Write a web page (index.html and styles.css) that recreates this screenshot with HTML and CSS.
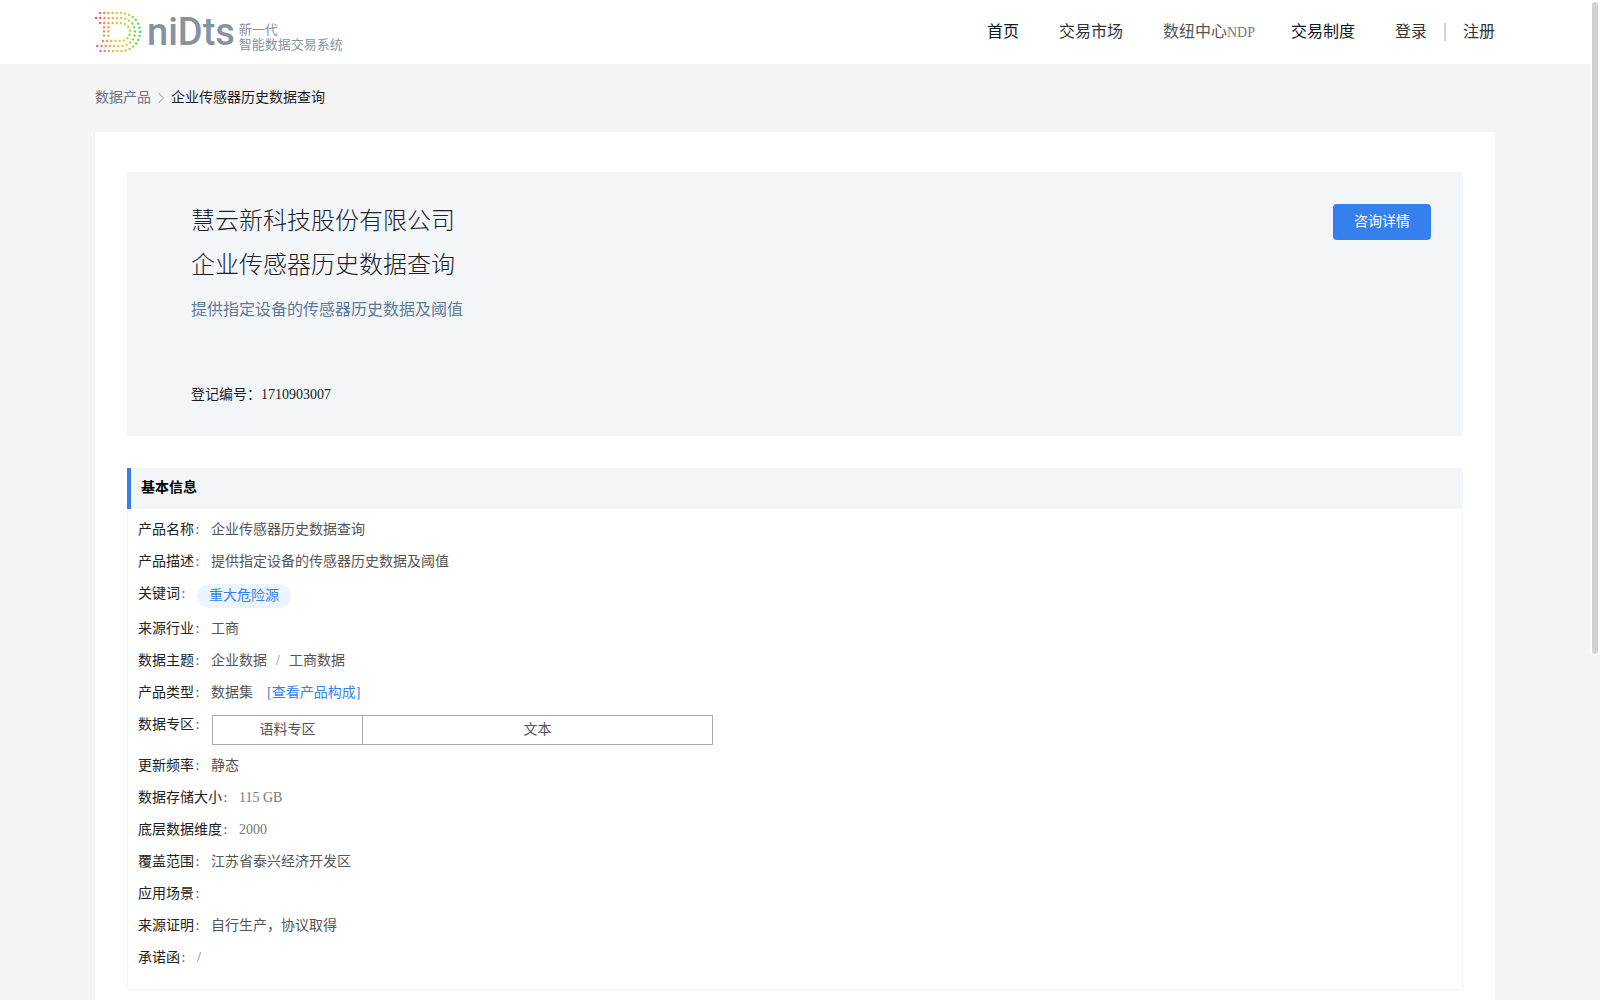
FILE: index.html
```html
<!DOCTYPE html>
<html lang="zh-CN">
<head>
	<meta charset="UTF-8">
	<title>企业传感器历史数据查询</title>
	<link rel="stylesheet" href="styles.css">
</head>
<body>
<!-- 头部 -->
<header class="header">
	<div class="wrap header-inner">
		<a href="#" class="logo">
			<svg class="logo-mark" width="48" height="44" viewBox="0 0 48 44" aria-hidden="true">
				<defs>
					<linearGradient id="dots" gradientUnits="userSpaceOnUse" x1="0" y1="0" x2="46" y2="0">
						<stop offset="0" stop-color="#f5437c"/>
						<stop offset=".2" stop-color="#f78358"/>
						<stop offset=".4" stop-color="#edb83a"/>
						<stop offset=".62" stop-color="#dbd52a"/>
						<stop offset=".8" stop-color="#93d42f"/>
						<stop offset="1" stop-color="#2fdc78"/>
					</linearGradient>
				</defs>
				<g fill="none" stroke="url(#dots)" stroke-width="2.4" stroke-linecap="round" stroke-dasharray="0 4.2">
					<path d="M5 3H26A19 19 0 0 1 26 41H5"/>
					<path d="M1 8H26A14 14 0 0 1 26 36H1"/>
					<path d="M5 13H26A9 9 0 0 1 26 31H5"/>
					<path d="M9 17.2L9.01 27.5M13.4 17.2L13.41 27.5"/>
				</g>
			</svg>
			<span class="logo-name">niDts</span>
			<span class="logo-text"><span>新一代</span><span>智能数据交易系统</span></span>
		</a>
		<nav class="nav">
			<a href="#" class="on">首页</a>
			<a href="#">交易市场</a>
			<a href="#" class="ndp">数纽中心<span>NDP</span></a>
			<a href="#" class="on">交易制度</a>
			<div class="user">
				<a href="#">登录</a>
				<i class="line"></i>
				<a href="#">注册</a>
			</div>
		</nav>
	</div>
</header>

<!-- 面包屑 -->
<div class="wrap crumb">
	<a href="#">数据产品</a>
	<svg width="8" height="12" viewBox="0 0 8 12" aria-hidden="true"><path d="M1.5 1L6.5 6L1.5 11" fill="none" stroke="#b4b8c0" stroke-width="1.2"/></svg>
	<span>企业传感器历史数据查询</span>
</div>

<main class="wrap main">
	<div class="banner">
		<div class="banner-info">
			<h1>慧云新科技股份有限公司</h1>
			<h1>企业传感器历史数据查询</h1>
			<p class="desc">提供指定设备的传感器历史数据及阈值</p>
			<p class="code">登记编号：<span>1710903007</span></p>
		</div>
		<button type="button" class="btn">咨询详情</button>
	</div>

	<!-- 基本信息 -->
	<section class="info">
		<h2>基本信息</h2>
		<dl>
			<div class="row"><dt>产品名称<b>:</b></dt><dd>企业传感器历史数据查询</dd></div>
			<div class="row"><dt>产品描述<b>:</b></dt><dd>提供指定设备的传感器历史数据及阈值</dd></div>
			<div class="row"><dt>关键词<b>:</b></dt><dd><span class="tag">重大危险源</span></dd></div>
			<div class="row"><dt>来源行业<b>:</b></dt><dd>工商</dd></div>
			<div class="row"><dt>数据主题<b>:</b></dt><dd>企业数据<i class="slash">/</i>工商数据</dd></div>
			<div class="row"><dt>产品类型<b>:</b></dt><dd>数据集<a href="#">[查看产品构成]</a></dd></div>
			<div class="row"><dt>数据专区<b>:</b></dt><dd>
				<table>
					<tr><td class="zone">语料专区</td><td class="type">文本</td></tr>
				</table>
			</dd></div>
			<div class="row"><dt>更新频率<b>:</b></dt><dd>静态</dd></div>
			<div class="row"><dt>数据存储大小<b>:</b></dt><dd class="num">115 GB</dd></div>
			<div class="row"><dt>底层数据维度<b>:</b></dt><dd class="num">2000</dd></div>
			<div class="row"><dt>覆盖范围<b>:</b></dt><dd>江苏省泰兴经济开发区</dd></div>
			<div class="row"><dt>应用场景<b>:</b></dt><dd></dd></div>
			<div class="row"><dt>来源证明<b>:</b></dt><dd>自行生产，协议取得</dd></div>
			<div class="row"><dt>承诺函<b>:</b></dt><dd class="num">/</dd></div>
		</dl>
	</section>
</main>
<div class="scrollbar"></div>
</body>
</html>
```
FILE: styles.css
```css
*{box-sizing: border-box;}
body,h1,h2,p,dl,dd{margin: 0;padding: 0;}
body{padding-right: 10px;background-color: #f4f4f4;color: #222;font: 14px/22px "Liberation Serif","Noto Sans CJK SC",sans-serif;}
a{color: inherit;text-decoration: none;}
i{font-style: normal;}
svg{display: block;}
.wrap{max-width: 1400px;margin: 0 auto;}

/*头部*/
.header{margin-right: -10px;padding-right: 10px;background-color: #fff;}
.header-inner{display: flex;justify-content: space-between;align-items: center;height: 64px;}
.logo{display: flex;align-items: center;color: #8692a0;}
.logo-name{margin-left: 4px;font: 500 38px/44px Roboto,sans-serif;}
.logo-text{display: grid;margin: 8px 0 0 4px;font: 13px/15px "Noto Sans CJK SC",sans-serif;}
.nav{display: flex;gap: 40px;font-size: 16px;line-height: 24px;color: #333;}
.nav .on{color: #0d1426;}
.nav .ndp{width: 88px;white-space: nowrap;color: #555;}
.nav .ndp span{font-size: 14px;color: #777;}
.user{display: flex;align-items: center;}
.user .line{width: 2px;height: 18px;margin: 0 17px;background-color: #d3d3d3;}

/*面包屑*/
.crumb{display: flex;align-items: center;gap: 6px;height: 68px;color: #1a1c28;}
.crumb a{color: #6f7380;}

.main{min-height: 900px;padding: 40px 32px;background-color: #fff;}
.banner{display: flex;justify-content: space-between;align-items: flex-start;padding: 27px 32px 30px 64px;background-color: #f2f6f9;}
.banner h1{font-weight: 300;font-size: 24px;line-height: 44px;color: #1d2129;}
.banner .desc{line-height: 24px;margin-top: 11px;font-size: 16px;color: #5f7a99;}
.banner .code{margin-top: 62px;color: #1a1c28;}
.btn{width: 98px;height: 36px;margin-top: 5px;padding: 0;border: 0;border-radius: 4px;background-color: #3680ee;font: inherit;color: #fff;}

/*基本信息*/
.info{margin-top: 32px;}
.info h2{height: 41px;padding: 0 10px;border-left: 4px solid #3680ee;background-color: #f2f6f9;font-size: 14px;line-height: 40px;color: #000;}
.info dl{padding: 10px;border: 1px solid #f4f5f6;border-top: 0;}
.row{display: flex;gap: 10px;margin-bottom: 10px;}
.row b{display: inline-block;width: 7px;font-weight: normal;text-align: center;color: #555;}
.row dd{color: #555;}
.row .num{color: #777;}
.row dd a{margin-left: 14px;color: #3680ee;}
.tag{display: block;height: 24px;margin-top: 1px;padding: 0 12px;border-radius: 12px;background-color: #ecf5ff;line-height: 24px;color: #3680ee;}
.slash{display: inline-block;width: 22px;text-align: center;color: #888;}
table{margin: 1px 0 0 1px;border-collapse: collapse;}
td{height: 29px;padding: 0;border: 1px solid #aaa;line-height: 28px;text-align: center;}
.zone{width: 150px;}
.type{width: 350px;}

/*滚动条*/
.scrollbar{position: fixed;top: 0;right: 0;width: 10px;height: 656px;border: 2px solid #fff;border-radius: 5px;background-color: #d2d2d2;}
```
